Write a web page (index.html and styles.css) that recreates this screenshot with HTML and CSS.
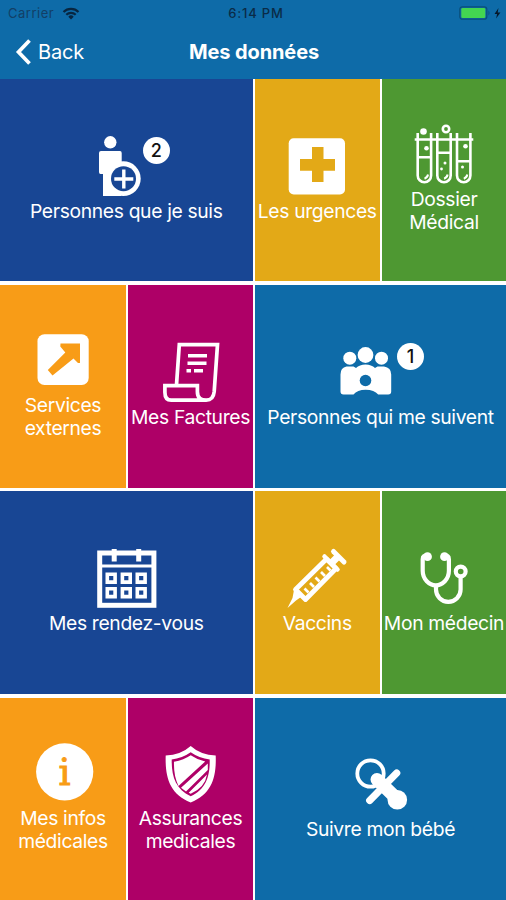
FILE: index.html
```html
<!DOCTYPE html>
<html lang="fr">
<head>
<meta charset="utf-8">
<title>Mes données</title>
<link rel="stylesheet" href="styles.css">
</head>
<body>
<header class="header">
  <div class="status">
    <div class="carrier"><span>Carrier</span>
      <svg class="wifi" viewBox="0 0 18 13"><path d="M1.500 5a10.500 10.500 0 0 1 15 0M4.300 7.800a6.600 6.600 0 0 1 9.400 0" fill="none" stroke="#082640" stroke-width="2.100"/><path d="M6.300 9.700a3.800 3.800 0 0 1 5.400 0L9 12.500z" fill="#082640"/></svg>
    </div>
    <div class="time">6:14 PM</div>
    <div class="power">
      <svg class="battery" viewBox="0 0 42 14"><rect x=".8" y=".8" width="27" height="12.400" rx="2.500" fill="none" stroke="#0a4f7a" stroke-width="1.200"/><rect x="2.300" y="2" width="24" height="10" rx="1.300" fill="#43d551"/><path d="M29.500 4.500q2 2.500 0 5z" fill="#0a4f7a"/><path d="M39.500 2l-4 6h2.600l-1 4.500 4.300-6h-2.700z" fill="#06182a"/></svg>
    </div>
  </div>
  <nav class="nav">
    <a class="back"><svg class="chevron" viewBox="0 0 16 26"><path d="M14.500 1.500 3.500 13l11 11.500" fill="none" stroke="#fff" stroke-width="3.700"/></svg><span>Back</span></a>
    <h1 class="title">Mes données</h1>
  </nav>
</header>
<main class="rows">
  <section class="row row-a">
    <div class="tile navy">
      <div class="icon">
        <svg viewBox="94 136 64 63"><g fill="#fff"><circle cx="110.300" cy="141.300" r="6.200"/><path d="M101 150h19q1.700 0 1.700 2v11L121 195h-18v-22h-2.500q-1.500 0-1.500-2v-19q0-2 2-2z"/><circle cx="123.300" cy="177.700" r="17.400"/></g><circle cx="123.500" cy="177.700" r="12.500" fill="#184694"/><path d="M114.300 178h19M123.800 168.500v19" stroke="#fff" stroke-width="3.400"/></svg>
        <span class="badge">2</span>
      </div>
      <p class="label">Personnes que je suis</p>
    </div>
    <div class="tile gold">
      <div class="icon"><svg viewBox="285 136 64 63"><rect x="288.700" y="137.300" width="56.300" height="56.200" rx="5" fill="#fff"/><path d="M312 146h11.500v12H335v11.700h-11.500V181H312v-11.300h-12V158h12z" fill="#e3a917"/></svg></div>
      <p class="label">Les urgences</p>
    </div>
    <div class="tile green">
      <div class="icon"><svg viewBox="412 124.500 64 63"><g fill="none" stroke="#fff" stroke-width="2.600"><path d="M414.700 139h58.600M417.700 132.500v42.500a6.700 6.700 0 0 0 13.400 0v-42.500M437.300 132.500v42.500a6.700 6.700 0 0 0 13.400 0v-42.500M457 132.500v42.500a6.700 6.700 0 0 0 13.400 0v-42.500M417.700 156.700h13.400M437.300 152.300h13.400M457 160.700h13.400" /><circle cx="446" cy="128.500" r="3.200"/><path d="M428 174q-.5 3-3.500 4.200M447.600 174q-.5 3-3.500 4.200M467.300 174q-.5 3-3.500 4.200" stroke-width="2"/></g><g fill="#fff"><circle cx="423.500" cy="131" r="3.300"/><circle cx="426.500" cy="147.700" r="2.300"/><circle cx="465.500" cy="145.700" r="2.300"/><circle cx="445" cy="162.500" r="1.500"/><circle cx="441.500" cy="168.500" r="1.400"/><circle cx="462.500" cy="166.500" r="1.500"/></g></svg></div>
      <p class="label">Dossier<br>Médical</p>
    </div>
  </section>
  <section class="row row-b">
    <div class="tile orange">
      <div class="icon"><svg viewBox="31 331 64 63"><rect x="37.500" y="334.300" width="51.200" height="50.700" rx="7" fill="#fff"/><path d="M60.500 343.500H80v19.500h-2l-4.500-4.500-21 17-4.700-5.500 17.500-17.500-5-6z" fill="#f89c17"/></svg></div>
      <p class="label">Services<br>externes</p>
    </div>
    <div class="tile magenta">
      <div class="icon"><svg viewBox="158 342 64 63"><path d="M175.500 384l2.800-40.300h38.200l-3.300 47q-.8 8.500-8 8.500h-35q-6.300 0-6.300-8V384.700h32.500v6q0 8.500 8.800 8.500" fill="none" stroke="#fff" stroke-width="3.700"/><path d="M187 354.800h19M186.500 362.300h19M185.500 369.800h4.500M193 369.800h9" stroke="#fff" stroke-width="3.400"/></svg></div>
      <p class="label">Mes Factures</p>
    </div>
    <div class="tile blue">
      <div class="icon">
        <svg viewBox="348.500 342.500 64 63"><g fill="#fff"><circle cx="349.300" cy="357.700" r="6.500"/><circle cx="365" cy="354.500" r="7.900"/><circle cx="381" cy="357.700" r="6.500"/><path d="M346 366h7l2.500 1.500q3.500-3.500 9.500-3.500t9.500 3.500l2.500-1.500h6.500q7.200 1 7.200 8v17q0 3-3 3h-10q-4-4.800-12.500-4.800T353 394h-10q-3 0-3-3v-17q0-7 6-8z"/></g><circle cx="365" cy="380" r="5.800" fill="#0e6ba8"/></svg>
        <span class="badge">1</span>
      </div>
      <p class="label">Personnes qui me suivent</p>
    </div>
  </section>
  <section class="row row-a">
    <div class="tile navy">
      <div class="icon"><svg viewBox="94 549 64 63"><g fill="none" stroke="#fff"><rect x="99.700" y="553" width="54.200" height="52.300" stroke-width="5"/><path d="M102 566h50" stroke-width="3"/><path d="M114.200 549v12.500M138.700 549v12.500" stroke-width="5"/><path d="M107.300 574.300h7.800v7.800h-7.800zM122.400 574.300h7.800v7.800h-7.800zM137.300 574.300h7.800v7.800h-7.800zM107.300 588.800h7.800v7.800h-7.800zM122.400 588.800h7.800v7.800h-7.800zM137.300 588.800h7.800v7.800h-7.800z" stroke-width="3.600"/></g></svg></div>
      <p class="label">Mes rendez-vous</p>
    </div>
    <div class="tile gold">
      <div class="icon"><svg viewBox="285 549 64 63"><g fill="none" stroke="#fff" stroke-linejoin="round"><path d="M295.500 589.500l31-30.500 9.500 9.500-30.500 31z" stroke-width="4.800"/><path d="M332 562.500l7-7" stroke-width="7"/><path d="M333.500 551.500l10.500 10.500" stroke-width="5" stroke-linecap="round"/><path d="M324.500 556.500l13 13" stroke-width="4.500" stroke-linecap="round"/><path d="M308.500 592.500l-4-4M314 587l-4-4M319.500 581.500l-4-4M325 576l-4-4M330.500 570.500l-3.500-3.500" stroke-width="2.700"/></g><path d="M294 590l7 7-5 3.500-8.500 7.500 5-10z" fill="#fff"/></svg></div>
      <p class="label">Vaccins</p>
    </div>
    <div class="tile green">
      <div class="icon"><svg viewBox="412 549 64 63"><g fill="none" stroke="#fff" stroke-width="4.200"><path d="M427 556.300q-4.300-1.500-4.300 3v11.500c0 8.500 6.500 14.500 13.100 14.500s13.100-6 13.100-14.500v-11.500q0-4.500-4.300-3"/><path d="M436 585v4.500a12.300 12.300 0 0 0 24.600 0V577"/><circle cx="460.700" cy="571.500" r="4.900"/></g><circle cx="427.500" cy="556.700" r="4.400" fill="#fff"/><circle cx="444.500" cy="556.700" r="4.400" fill="#fff"/></svg></div>
      <p class="label">Mon médecin</p>
    </div>
  </section>
  <section class="row row-b">
    <div class="tile orange">
      <div class="icon"><svg viewBox="31 743.500 64 63"><circle cx="64.700" cy="771.300" r="28.600" fill="#fff"/><text class="info" x="64.700" y="784" text-anchor="middle">i</text></svg></div>
      <p class="label">Mes infos<br>médicales</p>
    </div>
    <div class="tile magenta">
      <div class="icon"><svg viewBox="159 743 64 63"><path d="M190.700 745q10 9 25 9.500C216.500 776 212 793 190.700 801.500 169.500 793 165 776 165.700 754.500q15-.5 25-9.500z" fill="#fff"/><path d="M190.700 751.300q8.500 6 19 7.200C210 775.500 206 788 190.700 795.300 175.500 788 171.500 775.500 171.700 758.500q10.500-1.200 19-7.200z" fill="#ae0067"/><path d="M190.700 754.200q6.500 4.500 14.500 6.300L178.500 785Q173.500 775 174 760.800q10-2 16.700-6.600zM207.800 762.500v6.500L186 790.500l-5-3.800zM207 773.500q-2 13-16.300 19.300l-2-1z" fill="#fff"/></svg></div>
      <p class="label">Assurances<br>medicales</p>
    </div>
    <div class="tile blue">
      <div class="icon"><svg viewBox="348.500 755 64 63"><g fill="none" stroke="#fff" stroke-linecap="round"><circle cx="370" cy="773.500" r="13.200" stroke-width="3.800"/><path d="M396.200 773l-27 27.500" stroke-width="7.200"/><path d="M376.500 779.500L392 794.500" stroke-width="13"/></g><circle cx="396.800" cy="799.800" r="9.800" fill="#fff"/></svg></div>
      <p class="label">Suivre mon bébé</p>
    </div>
  </section>
</main>
</body>
</html>
```
FILE: styles.css
```css
* { box-sizing: border-box; }
body {
  margin: 0;
  width: 506px;
  height: 900px;
  overflow: hidden;
  font-family: Inter, "Liberation Sans", sans-serif;
  background: #fff;
  color: #fff;
}
.header { height: 79px; background: #0e6ba8; }
.status {
  display: grid;
  grid-template-columns: 1fr auto 1fr;
  align-items: center;
  height: 26px;
  padding: 0 5px 0 8px;
  font-size: 13px;
  color: #082640;
}
.carrier { display: flex; align-items: center; gap: 8px; color: #123f66; letter-spacing: .5px; }
.wifi { width: 18px; height: 13px; }
.time { margin-left: 3px; font-weight: 500; font-size: 13px; letter-spacing: .8px; color: #0a2b47; }
.power { display: flex; justify-content: flex-end; }
.battery { width: 42px; height: 14px; }
.nav {
  display: grid;
  grid-template-columns: 1fr auto 1fr;
  align-items: center;
  height: 52px;
  padding: 0 15px;
}
.back { display: flex; align-items: center; gap: 7px; font-size: 20px; letter-spacing: -.2px; }
.chevron { width: 16px; height: 26px; }
.title { margin: 0 0 0 2px; font-size: 20px; font-weight: 650; line-height: 24px; letter-spacing: -.1px; }
.rows { display: grid; grid-template-rows: 202px 203px 203px 202px; row-gap: 3.670px; }
.row { display: grid; }
.row-a { grid-template-columns: 252.500px 125px 124px; column-gap: 2.250px; }
.row-b { grid-template-columns: 126px 124.500px 251px; column-gap: 2.250px; }
.tile {
  display: flex;
  flex-direction: column;
  align-items: center;
  justify-content: center;
  min-width: 0;
  padding-bottom: 1px;
}
.navy { background: #184694; }
.gold { background: #e3a917; }
.green { background: #4e9832; }
.orange { background: #f89c17; }
.magenta { background: #ae0067; }
.blue { background: #0e6ba8; }
.icon { position: relative; width: 64px; height: 63px; }
.icon svg { display: block; width: 64px; height: 63px; overflow: visible; }
.badge {
  position: absolute;
  left: 48.500px;
  top: 0;
  width: 27px;
  height: 27px;
  border-radius: 50%;
  background: #fff;
  color: #111;
  font-size: 18px;
  font-weight: 500;
  line-height: 27px;
  text-align: center;
}
.info {
  font-family: "DejaVu Serif", serif;
  font-size: 38px;
  fill: #f89c17;
  stroke: #f89c17;
  stroke-width: .9px;
}
.label {
  margin: 0;
  font-size: 19.300px;
  line-height: 23px;
  letter-spacing: -.34px;
  text-align: center;
  white-space: nowrap;
}
```
